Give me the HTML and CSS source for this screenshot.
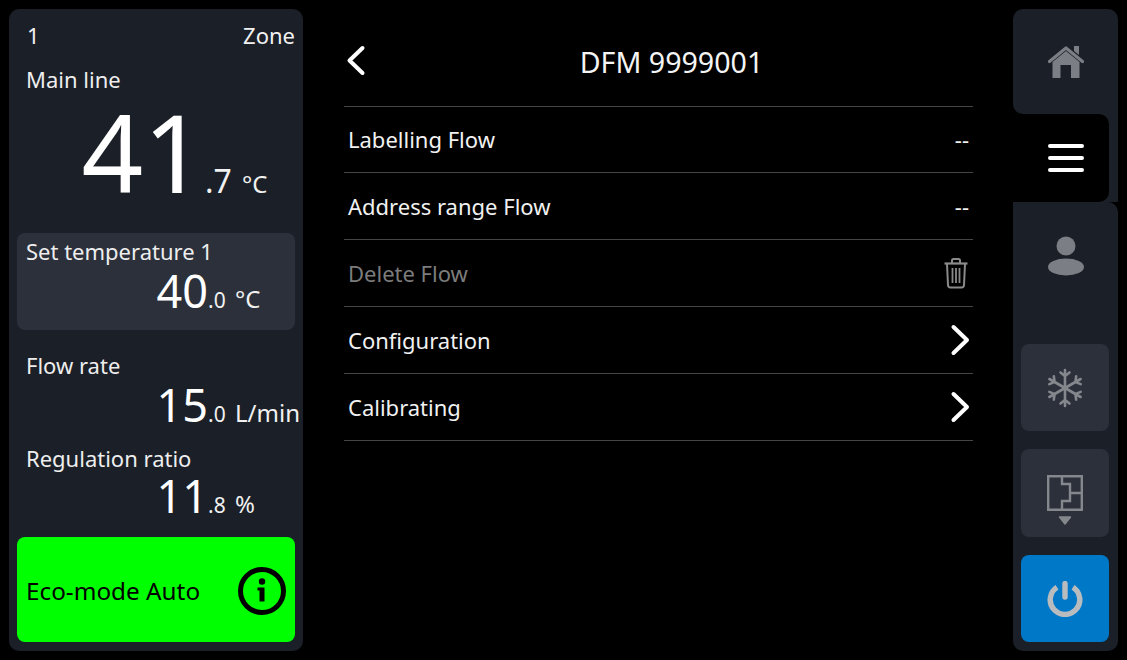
FILE: index.html
```html
<!DOCTYPE html>
<html lang="en">
<head>
<meta charset="utf-8">
<title>DFM 9999001</title>
<link rel="stylesheet" href="styles.css">
</head>
<body>
<div class="app">
  <aside class="zone">
    <div class="zone-head"><span>1</span><span>Zone</span></div>
    <div class="label main-label">Main line</div>
    <div class="reading reading-main"><span class="int">41</span><span class="frac">.7</span><span class="unit">°C</span></div>
    <div class="setbox">
      <div class="label">Set temperature 1</div>
      <div class="reading reading-set"><span class="int">40</span><span class="frac">.0</span><span class="unit">°C</span></div>
    </div>
    <div class="label flow-label">Flow rate</div>
    <div class="reading"><span class="int">15</span><span class="frac">.0</span><span class="unit">L/min</span></div>
    <div class="label ratio-label">Regulation ratio</div>
    <div class="reading"><span class="int">11</span><span class="frac">.8</span><span class="unit">%</span></div>
    <div class="eco">
      <span>Eco-mode Auto</span>
      <svg class="eco-icon" viewBox="0 0 48 48" width="48" height="48"><circle cx="24" cy="24" r="21.500" fill="none" stroke="#000" stroke-width="5"/><circle cx="24" cy="14.500" r="3.200" fill="#000"/><path d="M19.500 20.500h7v14h-5v-11h-2z" fill="#000"/></svg>
    </div>
  </aside>

  <main class="detail">
    <header class="title">
      <svg class="back" viewBox="0 0 20 32" width="20" height="32"><path d="M16.500 3 3.500 15.500 16.500 28" fill="none" stroke="#fff" stroke-width="4" stroke-linecap="round" stroke-linejoin="round"/></svg>
      <h1>DFM 9999001</h1>
    </header>
    <ul class="rows">
      <li class="row"><span>Labelling Flow</span><span class="dash">--</span></li>
      <li class="row"><span>Address range Flow</span><span class="dash">--</span></li>
      <li class="row row-off"><span>Delete Flow</span>
        <svg viewBox="0 0 26 32" width="26" height="32"><g fill="none" stroke="#8a8a8a" stroke-width="2"><path d="M1.500 6.500h23" stroke-width="2.200"/><path d="M9 6V3.500Q9 2 10.500 2h5Q17 2 17 3.500V6"/><path d="M4 7l1 21q.1 2.500 2.500 2.500h11q2.400 0 2.500-2.500l1-21"/><path d="M9.500 11v15M13 11v15M16.500 11v15" stroke-width="1.800"/></g></svg>
      </li>
      <li class="row"><span>Configuration</span>
        <svg class="chev" viewBox="0 0 20 32" width="20" height="32"><path d="M3.500 3 17 16 3.500 29" fill="none" stroke="#fff" stroke-width="4" stroke-linecap="round" stroke-linejoin="round"/></svg>
      </li>
      <li class="row"><span>Calibrating</span>
        <svg class="chev" viewBox="0 0 20 32" width="20" height="32"><path d="M3.500 3 17 16 3.500 29" fill="none" stroke="#fff" stroke-width="4" stroke-linecap="round" stroke-linejoin="round"/></svg>
      </li>
    </ul>
  </main>

  <nav class="rail">
    <div class="rail-home">
      <svg viewBox="0 0 36 34" width="36" height="34"><path d="M4.500 33V17L18 6l13.500 11v16H23V20H12.500v13z" fill="#7b7f85"/><path d="M1.500 16.500 18 3l16.500 13.500" fill="none" stroke="#7b7f85" stroke-width="3.200" stroke-linecap="round" stroke-linejoin="round"/><path d="M26 1h5v9l-5-4z" fill="#7b7f85"/></svg>
    </div>
    <div class="rail-active">
      <div class="rail-menu">
        <svg viewBox="0 0 36 30" width="36" height="30"><path d="M2 3h32M2 15h32M2 27h32" stroke="#fff" stroke-width="4" stroke-linecap="round"/></svg>
      </div>
    </div>
    <div class="rail-rest">
      <div class="rail-user">
        <svg viewBox="0 0 36 40" width="36" height="40"><circle cx="18" cy="10" r="9.500" fill="#7b7f85"/><ellipse cx="18" cy="31" rx="18" ry="8.500" fill="#7b7f85"/></svg>
      </div>
      <div class="tile tile-snow">
        <svg viewBox="0 0 36 40" width="36" height="40"><g fill="none" stroke="#84878c" stroke-width="2.600" stroke-linecap="round"><g id="arm"><path d="M18 20V2M13.500 4.500 18 8l4.500-3.500"/></g><use href="#arm" transform="rotate(60 18 20)"/><use href="#arm" transform="rotate(120 18 20)"/><use href="#arm" transform="rotate(180 18 20)"/><use href="#arm" transform="rotate(240 18 20)"/><use href="#arm" transform="rotate(300 18 20)"/></g></svg>
      </div>
      <div class="tile tile-plan">
        <svg viewBox="0 0 36 36" width="36" height="36"><path d="M1.200 1.200h33.600v33.600H1.200zM15 1v8h8v9h12M23 18v8h-8v9" fill="none" stroke="#84878c" stroke-width="2.400"/></svg>
        <svg class="caret" viewBox="0 0 14 9" width="14" height="9"><path d="M1.500 1h11L7 8z" fill="#84878c" stroke="#84878c" stroke-width="1.500" stroke-linejoin="round"/></svg>
      </div>
      <div class="tile tile-power">
        <svg viewBox="0 0 36 36" width="36" height="36"><g fill="none" stroke="#b9bcbf" stroke-width="5.400"><path d="M10 6.200a14.800 14.800 0 1 0 16 0"/><path d="M18 2.500v13.500" stroke-linecap="round"/></g></svg>
      </div>
    </div>
  </nav>
</div>
</body>
</html>
```
FILE: styles.css
```css
* { box-sizing: border-box; }
html, body { margin: 0; height: 100%; background: #000; }
body { font-family: "Noto Sans", sans-serif; color: #f1f1f1; overflow: hidden; }
.app { display: flex; width: 1127px; height: 660px; padding: 9px; }

.zone { width: 294px; height: 642px; background: #1b1f27; border-radius: 10px; padding: 12px 8px 9px 8px; display: flex; flex-direction: column; flex: none; }
.zone-head { display: flex; justify-content: space-between; padding-left: 10px; font-size: 22px; line-height: 29px; }
.label { font-size: 22px; line-height: 29px; padding-left: 9px; color: #eee; }
.main-label { margin-top: 15px; }
.reading { display: grid; grid-template-columns: 191px 26px auto; align-items: baseline; height: 50px; line-height: 50px; white-space: nowrap; }
.int { font-size: 45px; color: #fff; text-align: right; margin-left: -40px; }
.frac { font-size: 21px; }
.unit { font-size: 24px; padding-left: 1px; }
.reading-main { grid-template-columns: 188px 36px auto; height: 118px; line-height: 118px; margin-top: -1px; }
.reading-main .int { font-size: 108px; line-height: 118px; }
.reading-main .frac { font-size: 32px; }
.setbox { background: #2b303b; border-radius: 8px; height: 97px; margin-top: 22px; padding-top: 4px; }
.flow-label { margin-top: 21px; }
.ratio-label { margin-top: 14px; }
.ratio-label + .reading { margin-top: -2px; }
.eco { margin-top: auto; height: 105px; background: #00ff00; border-radius: 8px; color: #000; font-size: 24.300px; padding: 2px 9px 0 9px; display: flex; align-items: center; justify-content: space-between; }
.eco-icon { flex: none; }

.detail { flex: 1; padding: 0 40px 0 41px; }
.title { position: relative; height: 97px; padding: 7px 0 0 26px; display: flex; align-items: center; justify-content: center; }
.title h1 { margin: 0; font-size: 28.600px; font-weight: 400; color: #f4f4f4; }
.back { position: absolute; left: 2px; top: 36px; }
.rows { list-style: none; margin: 0; padding: 0; border-top: 1px solid #454545; }
.row { height: 67px; padding: 0 4px; display: flex; align-items: center; justify-content: space-between; border-bottom: 1px solid #454545; font-size: 22px; color: #f1f1f1; }
.row:first-child { height: 66px; padding-bottom: 1px; }
.row-off { color: #7c7c7c; }
.chev { margin-right: -1px; }

.rail { width: 105px; flex: none; display: flex; flex-direction: column; }
.rail-home { height: 105px; background: #1b1f27; border-radius: 10px 10px 0 10px; display: flex; align-items: center; justify-content: center; }
.rail-active { height: 88px; background: #1b1f27; }
.rail-menu { width: 96px; height: 88px; background: #000; border-radius: 0 10px 10px 0; display: flex; align-items: center; justify-content: center; padding-left: 9px; }
.rail-rest { flex: 1; background: #1b1f27; border-radius: 0 10px 10px 10px; display: flex; flex-direction: column; align-items: flex-end; padding: 0 9px 9px 9px; }
.rail-user { width: 87px; height: 107px; display: flex; align-items: center; justify-content: center; }
.tile { width: 88px; height: 88px; border-radius: 8px; background: #2b303b; display: flex; flex-direction: column; align-items: center; justify-content: center; }
.tile-snow { margin-top: 35px; height: 87px; }
.tile-plan { margin-top: 18px; gap: 5px; padding-top: 14px; }
.tile-power { margin-top: 18px; height: 87px; background: #0078c8; }
```
